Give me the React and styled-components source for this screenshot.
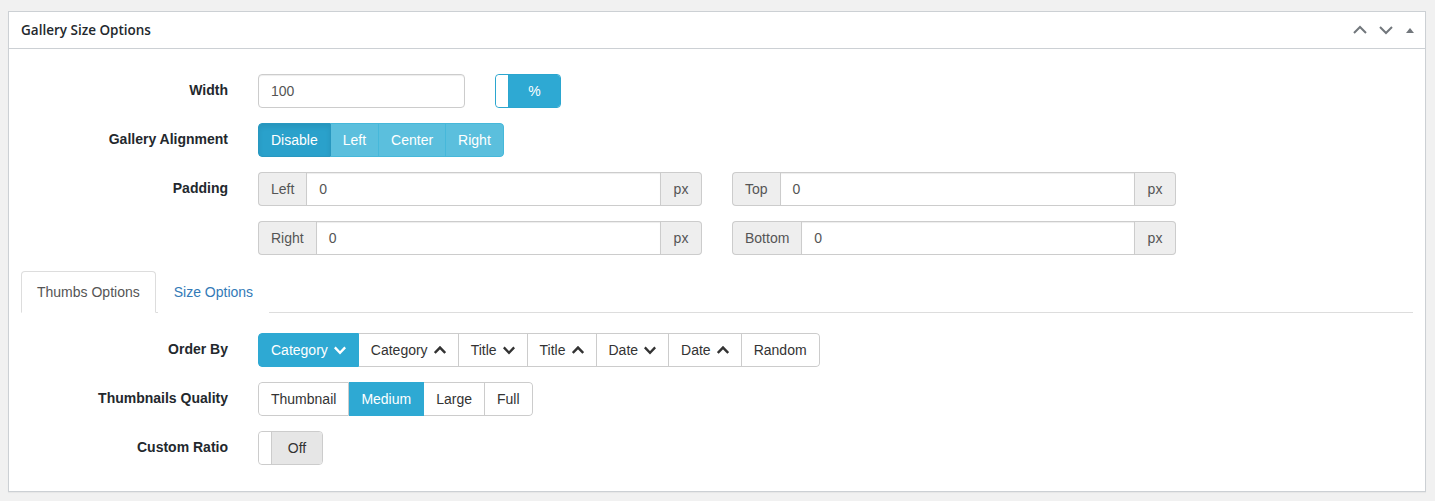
import React from 'react'
import styled, { createGlobalStyle } from 'styled-components'

const GlobalStyle = createGlobalStyle`
    body {
        margin: 0;
        background: #f1f1f1;
        font-family: "Liberation Sans", Arial, sans-serif;
    }
`

const Page = styled.div`
    padding: 11px 9px 9px 8px;
`
const Box = styled.section`
    background: #fff;
    border: 1px solid #ccd0d4;
    box-shadow: 0 1px 1px rgba(0,0,0,.04);
`
const BoxHeader = styled.header`
    display: flex;
    align-items: center;
    justify-content: space-between;
    height: 36px;
    padding: 0 12px;
    border-bottom: 1px solid #ccd0d4;
    & h2 {
        margin: 0;
        font-family: "Open Sans", sans-serif;
        font-size: 13.5px;
        font-weight: 600;
        color: #23282d;
    }
`
const HeaderActions = styled.div`
    display: flex;
    align-items: center;
    gap: 10px;
    margin-right: -3px;
    & svg { display: block; }
`
const BoxBody = styled.div`
    padding: 25px 12px 26px 12px;
`
const Form = styled.div`
    display: grid;
    grid-template-columns: 207px 1fr;
    column-gap: 30px;
    row-gap: 15px;
    align-items: start;
`
const Label = styled.div`
    text-align: right;
    line-height: 33px;
    font-size: 14px;
    font-weight: 700;
    color: #23282d;
`
const Field = styled.div`
    display: flex;
    align-items: center;
    gap: 30px;
`
const TextInput = styled.div`
    box-sizing: border-box;
    width: ${p => p.width || 207}px;
    height: 34px;
    padding: 0 12px;
    line-height: 32px;
    border: 1px solid #ccc;
    border-radius: 4px;
    font-size: 14px;
    color: #555;
    box-shadow: inset 0 1px 1px rgba(0,0,0,.075);
`
const Switch = styled.div`
    box-sizing: border-box;
    display: flex;
    width: ${p => p.width}px;
    height: 34px;
    border: 1px solid ${p => p.on ? '#2ba6cf' : '#ccc'};
    border-radius: 4px;
    overflow: hidden;
    font-size: 14px;
    & > span:first-child {
        width: 12px;
        background: #fff;
        border-radius: 4px 0 0 4px;
        border-right: 1px solid ${p => p.on ? '#2ba6cf' : '#ccc'};
    }
    & > span:last-child {
        flex: 1;
        display: flex;
        align-items: center;
        justify-content: center;
        background: ${p => p.on ? '#2ea9d3' : '#e6e6e6'};
        color: ${p => p.on ? '#fff' : '#333'};
    }
`
const BtnGroup = styled.div`
    display: inline-flex;
    border-radius: 4px;
    overflow: hidden;
`
const Btn = styled.div`
    box-sizing: border-box;
    display: flex;
    align-items: center;
    gap: 6px;
    height: 34px;
    padding: 0 12px;
    font-size: 14px;
    white-space: nowrap;
    ${p => p.variant === 'info' ? `
        background: ${p.active ? '#2aa1cb' : '#5bbfdd'};
        color: #fff;
        border: 1px solid ${p.active ? '#2898c0' : '#46b8da'};
        border-left-width: 0;
        &:first-child { border-left-width: 1px; border-radius: 4px 0 0 4px; }
        &:last-child { border-radius: 0 4px 4px 0; }
        ${p.active ? 'box-shadow: inset 0 3px 5px rgba(0,0,0,.08);' : ''}
    ` : `
        background: ${p.active ? '#2ea9d3' : '#fff'};
        color: ${p.active ? '#fff' : '#333'};
        border: 1px solid ${p.active ? '#2ea9d3' : '#ccc'};
        border-left-width: 0;
        &:first-child { border-left-width: 1px; border-radius: 4px 0 0 4px; }
        &:last-child { border-radius: 0 4px 4px 0; }
    `}
`
const PaddingGrid = styled.div`
    display: grid;
    grid-template-columns: 444px 444px;
    column-gap: 30px;
    row-gap: 15px;
`
const InputGroup = styled.div`
    display: flex;
    height: 34px;
    font-size: 14px;
    color: #555;
`
const Addon = styled.span`
    box-sizing: border-box;
    display: flex;
    align-items: center;
    justify-content: center;
    padding: 0 12px;
    background: #eee;
    border: 1px solid #ccc;
    border-radius: ${p => p.side === 'left' ? '4px 0 0 4px' : '0 4px 4px 0'};
    ${p => p.side === 'left' ? 'border-right: 0;' : 'border-left: 0; width: 41px;'}
`
const GroupInput = styled.span`
    flex: 1;
    display: flex;
    align-items: center;
    padding: 0 12px;
    border: 1px solid #ccc;
    box-shadow: inset 0 1px 1px rgba(0,0,0,.075);
`
const Tabs = styled.ul`
    list-style: none;
    display: flex;
    margin: 16px 0 20px 0;
    padding: 0;
    border-bottom: 1px solid #ddd;
`
const Tab = styled.li`
    margin: 0 2px -1px 0;
    padding: 10px 15px;
    line-height: 20px;
    font-size: 14px;
    border: 1px solid ${p => p.active ? '#ddd' : 'transparent'};
    border-bottom-color: ${p => p.active ? '#fff' : 'transparent'};
    border-radius: 4px 4px 0 0;
    background: #fff;
    color: ${p => p.active ? '#555' : '#337ab7'};
`

const Chevron = ({ up, color = 'currentColor' }) => (
    <svg width="12" height="12" viewBox="0 0 12 12" fill="none">
        <path d={up ? 'M0.8 9 L6 3.6 L11.2 9' : 'M0.8 3.4 L6 8.8 L11.2 3.4'}
            stroke={color} strokeWidth="2.4" />
    </svg>
)

const orderOptions = [
    { label: 'Category', dir: 'down', active: true },
    { label: 'Category', dir: 'up' },
    { label: 'Title', dir: 'down' },
    { label: 'Title', dir: 'up' },
    { label: 'Date', dir: 'down' },
    { label: 'Date', dir: 'up' },
    { label: 'Random' },
]

const qualityOptions = ['Thumbnail', 'Medium', 'Large', 'Full']

const paddings = [
    { side: 'Left' }, { side: 'Top' }, { side: 'Right' }, { side: 'Bottom' },
]

const App = () => {
    return (
        <Page>
            <GlobalStyle />
            <Box>
                <BoxHeader>
                    <h2>Gallery Size Options</h2>
                    <HeaderActions>
                        <svg width="16" height="16" viewBox="0 0 16 16" fill="none">
                            <path d="M2 11 L8 5 L14 11" stroke="#72777c" strokeWidth="2" />
                        </svg>
                        <svg width="16" height="16" viewBox="0 0 16 16" fill="none">
                            <path d="M2 5 L8 11 L14 5" stroke="#72777c" strokeWidth="2" />
                        </svg>
                        <svg width="12" height="16" viewBox="0 0 12 16">
                            <path d="M2 11 L6 6 L10 11 Z" fill="#72777c" />
                        </svg>
                    </HeaderActions>
                </BoxHeader>
                <BoxBody>
                    <Form>
                        <Label>Width</Label>
                        <Field>
                            <TextInput>100</TextInput>
                            <Switch on width={66}><span /><span>%</span></Switch>
                        </Field>

                        <Label>Gallery Alignment</Label>
                        <Field>
                            <BtnGroup>
                                {['Disable', 'Left', 'Center', 'Right'].map((a, i) => (
                                    <Btn key={a} variant="info" active={i === 0}>{a}</Btn>
                                ))}
                            </BtnGroup>
                        </Field>

                        <Label>Padding</Label>
                        <PaddingGrid>
                            {paddings.map(p => (
                                <InputGroup key={p.side}>
                                    <Addon side="left">{p.side}</Addon>
                                    <GroupInput>0</GroupInput>
                                    <Addon side="right">px</Addon>
                                </InputGroup>
                            ))}
                        </PaddingGrid>
                    </Form>

                    <Tabs>
                        <Tab active>Thumbs Options</Tab>
                        <Tab>Size Options</Tab>
                    </Tabs>

                    <Form>
                        <Label>Order By</Label>
                        <Field>
                            <BtnGroup>
                                {orderOptions.map((o, i) => (
                                    <Btn key={i} active={o.active}>
                                        {o.label}
                                        {o.dir && <Chevron up={o.dir === 'up'} />}
                                    </Btn>
                                ))}
                            </BtnGroup>
                        </Field>

                        <Label>Thumbnails Quality</Label>
                        <Field>
                            <BtnGroup>
                                {qualityOptions.map(q => (
                                    <Btn key={q} active={q === 'Medium'}>{q}</Btn>
                                ))}
                            </BtnGroup>
                        </Field>

                        <Label>Custom Ratio</Label>
                        <Field>
                            <Switch width={65}><span /><span>Off</span></Switch>
                        </Field>
                    </Form>
                </BoxBody>
            </Box>
        </Page>
    )
}

export default App
